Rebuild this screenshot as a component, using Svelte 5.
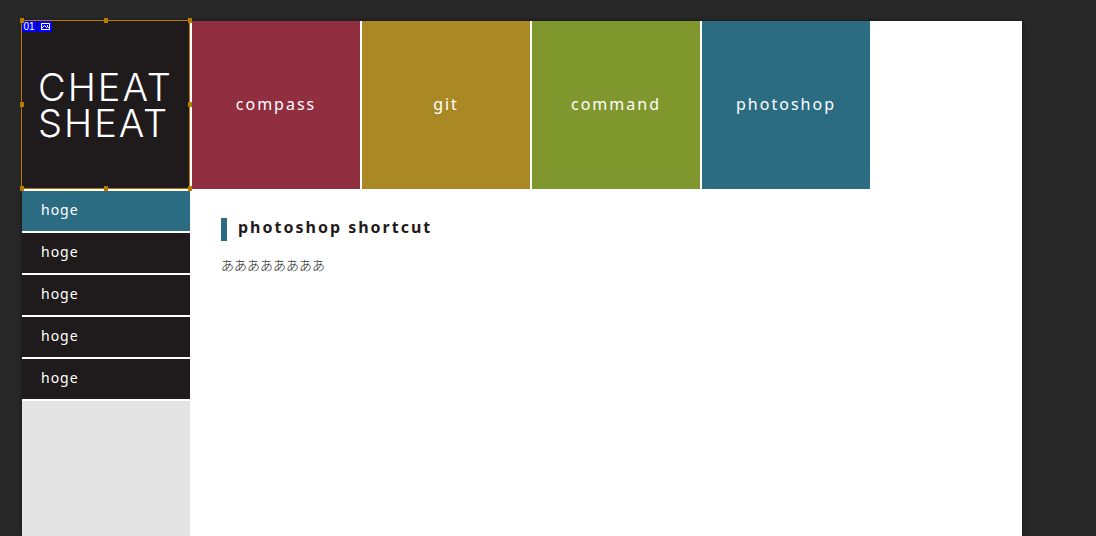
<script>
  const topics = [
    { name: 'compass', tone: 'red' },
    { name: 'git', tone: 'gold' },
    { name: 'command', tone: 'green' },
    { name: 'photoshop', tone: 'blue' }
  ];
  const entries = ['hoge', 'hoge', 'hoge', 'hoge', 'hoge'];
  const handles = ['nw', 'n', 'ne', 'w', 'e', 'sw', 's', 'se'];
</script>

<div class="canvas">
  <div class="board">
    <header>
      <div class="brand">
        <h1>CHEAT<br />SHEAT</h1>
        <div class="slice">
          <div class="tags">
            <span class="number">01</span>
            <span class="kind">
              <svg width="9" height="7" viewBox="0 0 9 7" shape-rendering="crispEdges" aria-hidden="true">
                <rect x="0.5" y="0.5" width="8" height="6" fill="none" stroke="#fff" />
                <path d="M1 4h1v1h-1zM2 3h1v1h-1zM3 2h1v1h-1zM4 3h1v1h-1zM5 4h1v1h-1zM6 3h1v1h-1zM7 4h1v1h-1zM6 2h1v1h-1z" fill="#fff" />
              </svg>
            </span>
          </div>
          {#each handles as handle}
            <i class="handle {handle}"></i>
          {/each}
        </div>
      </div>
      <nav class="topics">
        {#each topics as topic}
          <a class={topic.tone} href="#{topic.name}">{topic.name}</a>
        {/each}
      </nav>
    </header>
    <div class="body">
      <nav class="side">
        {#each entries as entry, i}
          <a href="#entry-{i + 1}" class:active={i === 0}>{entry}</a>
        {/each}
      </nav>
      <main>
        <h2>photoshop shortcut</h2>
        <p lang="ja">ああああああああ</p>
      </main>
    </div>
  </div>
</div>

<style>
  :global(body) {
    background: #282828;
  }
  .canvas {
    box-sizing: border-box;
    min-height: 100vh;
    padding: 21px 74px 0 22px;
    display: flex;
    font-family: 'Noto Sans', 'Open Sans', sans-serif;
  }
  .board {
    flex: 1;
    display: flex;
    flex-direction: column;
    gap: 2px;
    background: #fff;
    box-shadow: 0 0 5px #181818;
  }
  header,
  .topics {
    display: flex;
    gap: 2px;
  }
  a {
    color: #fff;
    text-decoration: none;
  }
  .brand,
  .topics a {
    box-sizing: border-box;
    width: 168px;
    height: 168px;
    display: flex;
    align-items: center;
  }
  .brand {
    position: relative;
    padding-left: 16px;
    background: #1f1a1b;
  }
  h1 {
    margin: 0;
    color: #fff;
    font: 300 38px/36px Inter, 'Liberation Sans', sans-serif;
    letter-spacing: 2px;
  }
  .topics a {
    padding-bottom: 2px;
    justify-content: center;
    font-size: 16px;
    line-height: 24px;
    letter-spacing: 2px;
  }
  .red {
    background: #912e40;
  }
  .gold {
    background: #aa8823;
  }
  .green {
    background: #80972d;
  }
  .blue,
  .side .active {
    background: #2c6c83;
  }
  .slice {
    position: absolute;
    inset: -1px 0 0 -1px;
    border: 1px solid #b77b00;
    display: flex;
    align-items: flex-start;
  }
  .tags {
    display: flex;
    gap: 2px;
    background: #0000b4;
  }
  .number,
  .kind {
    width: 14px;
    height: 11px;
    background: #00f;
    color: #fff;
    display: flex;
    align-items: center;
    justify-content: center;
    font: 10px/11px 'Liberation Sans', sans-serif;
  }
  .handle {
    position: absolute;
    width: 4px;
    height: 5px;
    background: #b77b00;
  }
  .nw,
  .n,
  .ne {
    top: -3px;
  }
  .w,
  .e {
    top: calc(50% - 3px);
  }
  .sw,
  .s,
  .se {
    bottom: -3px;
  }
  .nw,
  .w,
  .sw {
    left: -2px;
  }
  .n,
  .s {
    left: calc(50% - 2px);
  }
  .ne,
  .e,
  .se {
    right: -3px;
  }
  .body {
    flex: 1;
    display: flex;
  }
  .side {
    width: 168px;
    display: flex;
    flex-direction: column;
    background: #e4e4e4;
  }
  .side a {
    padding: 0 19px 2px;
    border-bottom: 2px solid #fff;
    background: #1f1a1b;
    font-size: 14px;
    line-height: 38px;
    letter-spacing: 1px;
  }
  main {
    flex: 1;
    padding: 27px 31px;
  }
  h2 {
    margin: 0;
    padding: 0 0 4px 11px;
    border-left: 6px solid #2c6c83;
    color: #1f1a1b;
    font-size: 16px;
    line-height: 19px;
    letter-spacing: 2px;
  }
  p {
    margin: 14px 0 0;
    color: #222;
    font: 300 13px/20px 'Noto Sans CJK JP', sans-serif;
  }
</style>
